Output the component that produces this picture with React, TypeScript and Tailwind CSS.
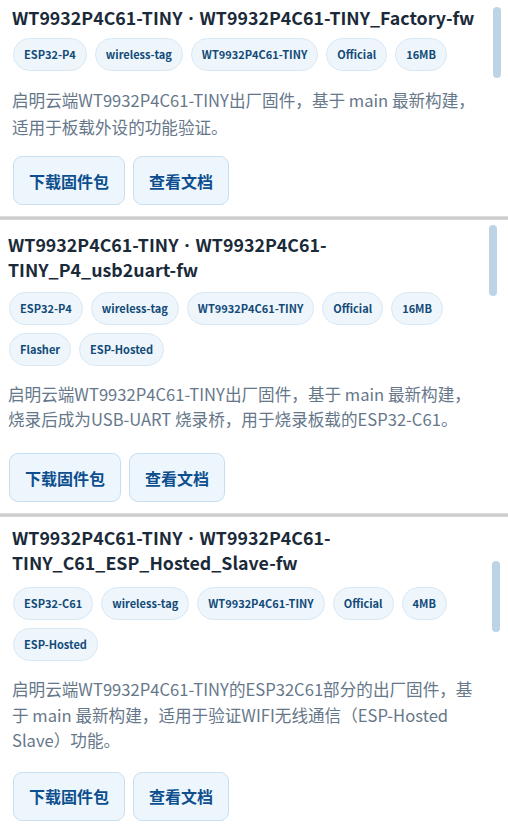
import React from 'react'

type Firmware = {
  id: string
  board: string
  name: string
  tags: string[]
  description: string
  // per-panel spacing; the panels come from different scroll positions
  shell: string
  thumb: string
  titleGap: string
  descLeading: string
  buttonGap: string
}

const firmwares: Firmware[] = [
  {
    id: 'factory',
    board: 'WT9932P4C61-TINY',
    name: 'WT9932P4C61-TINY_Factory-fw',
    tags: ['ESP32-P4', 'wireless-tag', 'WT9932P4C61-TINY', 'Official', '16MB'],
    description: '启明云端WT9932P4C61-TINY出厂固件，基于 main 最新构建，适用于板载外设的功能验证。',
    shell: 'pl-[12px] pt-[5px]',
    thumb: 'right-[7px] top-[7px]',
    titleGap: 'mb-[8px]',
    descLeading: 'leading-[27px]',
    buttonGap: 'mt-[15px]',
  },
  {
    id: 'usb2uart',
    board: 'WT9932P4C61-TINY',
    name: 'WT9932P4C61-TINY_P4_usb2uart-fw',
    tags: ['ESP32-P4', 'wireless-tag', 'WT9932P4C61-TINY', 'Official', '16MB', 'Flasher', 'ESP-Hosted'],
    description: '启明云端WT9932P4C61-TINY出厂固件，基于 main 最新构建，烧录后成为USB-UART 烧录桥，用于烧录板载的ESP32-C61。',
    shell: 'pl-[8px] pt-[12px]',
    thumb: 'right-[11px] top-[5px]',
    titleGap: 'mb-[10px]',
    descLeading: 'leading-[25px]',
    buttonGap: 'mt-[21px]',
  },
  {
    id: 'hosted-slave',
    board: 'WT9932P4C61-TINY',
    name: 'WT9932P4C61-TINY_C61_ESP_Hosted_Slave-fw',
    tags: ['ESP32-C61', 'wireless-tag', 'WT9932P4C61-TINY', 'Official', '4MB', 'ESP-Hosted'],
    description:
      '启明云端WT9932P4C61-TINY的ESP32C61部分的出厂固件，基于 main 最新构建，适用于验证WIFI无线通信（ESP-Hosted Slave）功能。',
    shell: 'pl-[12px] pt-[8px]',
    thumb: 'right-[8px] top-[44px]',
    titleGap: 'mb-[12px]',
    descLeading: 'leading-[25.5px]',
    buttonGap: 'mt-[18px]',
  },
]

function Tag({ label }: { label: string }) {
  return (
    <span className="h-[33px] px-[10px] flex items-center rounded-full bg-[#eef6fc] border border-[#d7e8f5] text-[11px] font-bold text-[#124a78]">
      {label}
    </span>
  )
}

function FirmwareCard({ fw, last }: { fw: Firmware; last?: boolean }) {
  return (
    <div className={`relative bg-white ${fw.shell} ${last ? 'pb-[10px]' : 'pb-[11px]'}`}>
      {/* scrollbar thumb of the panel */}
      <div className={`absolute w-[8px] h-[71px] rounded-full bg-[#bdd4e7] ${fw.thumb}`} />

      <h2 className={`w-[470px] text-[17.8px] leading-[25px] font-bold text-[#1b2a39] ${fw.titleGap}`}>
        {fw.board}{' '}
        {/* Latin font keeps the middle dot narrow */}
        <span className="mx-[2px] leading-none font-['Noto_Sans',sans-serif]">·</span>{' '}
        {fw.name}
      </h2>

      <div className="w-[466px]">
        <div className="flex flex-wrap gap-[8px] pl-px">
          {fw.tags.map(t => (
            <Tag key={t} label={t} />
          ))}
        </div>

        <p className={`mt-[16px] text-[16.6px] text-[#66778a] ${fw.descLeading}`}>{fw.description}</p>

        <div className={`flex gap-[8px] pl-px ${fw.buttonGap}`}>
          <button className="h-[49px] px-[15px] rounded-[9px] bg-[#eef6fd] border border-[#c7dff1] text-[16px] font-bold text-[#0d4f8e]">
            下载固件包
          </button>
          <button className="h-[49px] px-[15px] rounded-[9px] bg-[#eef6fd] border border-[#c7dff1] text-[16px] font-bold text-[#0d4f8e]">
            查看文档
          </button>
        </div>
      </div>
    </div>
  )
}

function Divider() {
  return <div className="h-[4px] bg-linear-to-b from-[#e4e4e4] via-[#c6c6c6] to-[#dcdcdc]" />
}

export default function App() {
  return (
    <div
      className="w-[508px] h-[831px] overflow-hidden bg-white relative"
      style={{ fontFamily: '"Noto Sans CJK SC", "Noto Sans", sans-serif' }}
    >
      {/* edge of the panel above */}
      <div className="absolute right-[8px] top-0 w-[6px] h-[2px] rounded-b bg-[#bdd4e7]" />
      {firmwares.map((fw, i) => (
        <React.Fragment key={fw.id}>
          <FirmwareCard fw={fw} last={i === firmwares.length - 1} />
          {i < firmwares.length - 1 && <Divider />}
        </React.Fragment>
      ))}
    </div>
  )
}
